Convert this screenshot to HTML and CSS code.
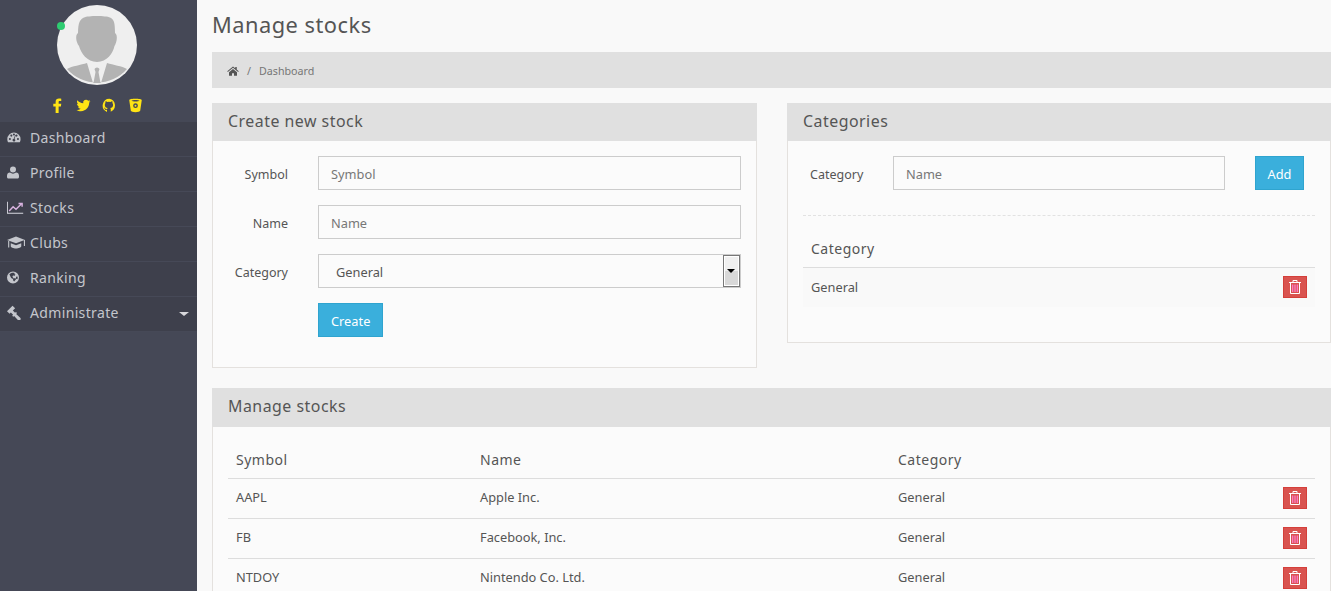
FILE: index.html

```html
<!DOCTYPE html>
<html lang="en">
<head>
<meta charset="UTF-8" />
<meta name="viewport" content="width=device-width, initial-scale=1" />
<title>Manage stocks</title>
<link rel="stylesheet" href="styles.css">
</head>
<body>

<div class="layout">
  <!-- Sidebar -->
  <aside class="sidebar">
    <div class="profile">
      <div class="avatar-wrap">
        <svg class="avatar" viewBox="0 0 80 80">
          <circle cx="40" cy="40" r="40" fill="#efefef"/>
          <path d="M10 64 C15 61 24 60 30 58 L36 78 L44 78 L50 58 C56 60 65 61 70 64 A40 40 0 0 1 10 64Z" fill="#b3b3b3"/>
          <path d="M37.500 64 a2.800 2.800 0 0 1 5 0 l-1 3 2 11 h-7 l2-11z" fill="#b3b3b3"/>
          <path d="M21 28 C21 18 23 14 27 12.500 C31 10.500 49 10.500 53 12.500 C57 14 58 18 58 28 C61 30 60 37 57.500 41 C56 48 50 57 40 57 C30 57 24 48 22 41 C19 37 18 30 21 28Z" fill="#b3b3b3"/>
        </svg>
        <span class="online-dot"></span>
      </div>
      <div class="social">
        <svg viewBox="0 0 12 16"><path d="M4 16V9H1.500V6H4V4C4 1.500 5.500 0.500 7.500 0.500 8.500 0.500 9.500 0.600 10 0.700V3.200H8.500C7.400 3.200 7.200 3.800 7.200 4.500V6H10L9.600 9H7.200V16Z"/></svg>
        <svg viewBox="0 0 24 24"><path d="M23 5c-.8.4-1.700.6-2.600.7.900-.6 1.600-1.400 2-2.500-.9.500-1.900.9-2.900 1.100A4.600 4.600 0 0 0 11.600 8.500C7.800 8.300 4.400 6.500 2.200 3.700c-1.200 2.100-.6 4.800 1.400 6.100-.7 0-1.400-.2-2-.6 0 2.200 1.500 4.100 3.700 4.600-.7.200-1.400.2-2.100.1.600 1.900 2.300 3.200 4.300 3.200A9.300 9.300 0 0 1 .800 19c2.100 1.300 4.500 2.100 7.100 2.100 8.600 0 13.500-7.300 13.200-13.800.9-.6 1.700-1.400 1.900-2.300z"/></svg>
        <svg viewBox="0 0 24 24"><path fill-rule="evenodd" d="M12 1a11 11 0 0 0-4 21.200v-3c-2.500.5-3.300-1-3.800-2.200-.3-.6-.8-1-1.200-1.300 1.300-.4 2.200.8 2.700 1.500.7 1 1.700 1 2.500.5.100-.7.400-1.200.8-1.600-2.600-.4-4.500-1.700-4.500-5 0-1.200.4-2.200 1.100-3-.2-.7-.3-1.900.2-3 1.200 0 2.300.7 2.800 1.200a10 10 0 0 1 5 0c.5-.5 1.600-1.200 2.800-1.200.5 1.100.4 2.300.2 3 .7.800 1.100 1.800 1.100 3 0 3.300-1.900 4.600-4.500 5 .5.500.8 1.200.8 2.200v3.600A11 11 0 0 0 12 1z"/></svg>
        <svg viewBox="0 0 24 24"><path fill-rule="evenodd" d="M2 3.500C2 .500 22 .500 22 3.500L19.500 20.500C19 23.500 5 23.500 4.500 20.500zM5.500 4.500C7 6 17 6 18.500 4.500 17 3 7 3 5.500 4.500zM12 8.500a3.800 3.800 0 1 0 0 7.600 3.800 3.800 0 0 0 0-7.600zM12 10.700a1.600 1.600 0 1 1 0 3.200 1.600 1.600 0 0 1 0-3.200z"/></svg>
      </div>
    </div>
    <ul class="nav">
      <li class="nav-item">
        <svg class="nav-icon" viewBox="0 -2.500 31 26" preserveAspectRatio="xMinYMid"><path fill-rule="evenodd" d="M12 2A11.500 11.500 0 0 0 .500 13.500c0 1.800.400 3.300 1.100 4.700.2.400.6.600 1 .6h18.800c.4 0 .8-.2 1-.6.700-1.400 1.100-2.900 1.100-4.700A11.500 11.500 0 0 0 12 2zM5 15a1.800 1.800 0 1 1 0-3.600A1.800 1.800 0 0 1 5 15zM7.500 9a1.800 1.800 0 1 1 0-3.600A1.800 1.800 0 0 1 7.500 9zM12 7a1.800 1.800 0 1 1 0-3.600A1.800 1.800 0 0 1 12 7zM14 16.500a2.500 2.500 0 0 1-4.500-1.500c0-1.200 1-2.200 2.200-2.400L14 6.500l.9.300-1.800 6.300c1.400 1 1.800 2.600.9 3.400zM19 15a1.800 1.800 0 1 1 0-3.600A1.800 1.800 0 0 1 19 15zM16.500 9a1.800 1.800 0 1 1 0-3.600 1.800 1.800 0 0 1 0 3.600z"/></svg>
        <span>Dashboard</span>
      </li>
      <li class="nav-item">
        <svg class="nav-icon" viewBox="1 -2.500 30 25" preserveAspectRatio="xMinYMid"><path d="M11 10a5 5 0 1 0 0-10 5 5 0 0 0 0 10zM6 10c-3 0-5 2-5 5.500v2c0 1.400 1 2.500 2.500 2.500h15c1.500 0 2.500-1.100 2.500-2.500v-2c0-3.500-2-5.500-5-5.500-1.500 1.200-3.300 2-5 2s-3.500-.8-5-2z"/></svg>
        <span>Profile</span>
      </li>
      <li class="nav-item">
        <svg class="nav-icon nav-icon-stocks" viewBox="0.500 -0.400 25 20.800" preserveAspectRatio="xMinYMid"><path d="M1 2v16h22" fill="none" stroke="#d8d8e0" stroke-width="1.500"/><path d="M3.500 15l5.500-6 4 3.500 7-7M16.500 4.500H21.500V9" fill="none" stroke="currentColor" stroke-width="2"/></svg>
        <span>Stocks</span>
      </li>
      <li class="nav-item">
        <svg class="nav-icon" viewBox="0 0 24 20" preserveAspectRatio="xMinYMid"><path d="M12 2 0 6.500l12 4.500 10.500-4v7.500H24V6.500zM5 11v4c0 1.500 3.500 3 7 3s7-1.500 7-3v-4l-7 2.500z"/><path d="M1.500 8v8.500H3V8z"/></svg>
        <span>Clubs</span>
      </li>
      <li class="nav-item">
        <svg class="nav-icon" viewBox="0 -2.500 30 25" preserveAspectRatio="xMinYMid"><path fill-rule="evenodd" d="M10 0a10 10 0 1 0 0 20 10 10 0 0 0 0-20zM4 4.500c1.500-1.500 3.500-2.500 6-2.500 1 0 2 .2 3 .6l-1 1.400 2 1-1 2-3-.5-1 2 2 3 3-.5 1 2-3 3.500-1.500-1-.5-3-3-1.500-1.500-3zM15 9l2-1 1 3-1 2-2-1z"/></svg>
        <span>Ranking</span>
      </li>
      <li class="nav-item">
        <svg class="nav-icon" viewBox="2 0 24.300 20.300" preserveAspectRatio="xMinYMid"><path d="M9.500 1 2 8.500l3.500 3.500 1.700-1.700 3 3-1.200 1.200 1.500 1.500 1.200-1.200 5 5.500c.9.900 2.300.9 3.200 0 .9-.9.900-2.300 0-3.200l-5.500-5 1.200-1.200-1.500-1.500-1.200 1.200-3-3L13 4.500z"/></svg>
        <span>Administrate</span>
        <span class="caret"></span>
      </li>
    </ul>
  </aside>

  <!-- Main -->
  <main class="main">
    <h1 class="page-title">Manage stocks</h1>
    <div class="breadcrumb">
      <svg class="home-icon" viewBox="0 0 24 20"><path d="M12 1 .500 10.500l1.200 1.500L12 3.500 22.300 12l1.200-1.500-4-3.300V2h-3v2.700zM4 12.500V19.500h6v-5h4v5h6v-7L12 6z"/></svg>
      <span class="crumb-sep">/</span>
      <span class="crumb">Dashboard</span>
    </div>

    <div class="top-row">
      <section class="panel panel-create">
        <h2 class="panel-heading">Create new stock</h2>
        <div class="panel-body form-body">
          <div class="form-row">
            <label class="form-label">Symbol</label>
            <input class="form-input" placeholder="Symbol" />
          </div>
          <div class="form-row">
            <label class="form-label">Name</label>
            <input class="form-input" placeholder="Name" />
          </div>
          <div class="form-row">
            <label class="form-label">Category</label>
            <div class="select-box">
              <span class="select-value">General</span>
              <span class="select-arrow"></span>
            </div>
          </div>
          <div class="form-row">
            <span class="form-label"></span>
            <button class="btn-info">Create</button>
          </div>
        </div>
      </section>

      <section class="panel panel-categories">
        <h2 class="panel-heading">Categories</h2>
        <div class="panel-body">
          <div class="category-form">
            <label class="form-label category-label">Category</label>
            <input class="form-input" placeholder="Name" />
            <button class="btn-info btn-add">Add</button>
          </div>
          <table class="data-table data-table-spaced">
            <thead><tr><th>Category</th><th></th></tr></thead>
            <tbody>
              <tr class="row-tint"><td>General</td><td class="cell-action"><button class="btn-delete"><svg viewBox="0 0 12 14"><use href="#trash"/></svg></button></td></tr>
            </tbody>
          </table>
        </div>
      </section>
    </div>

    <section class="panel panel-stocks">
      <h2 class="panel-heading">Manage stocks</h2>
      <div class="panel-body">
        <table class="data-table">
          <thead>
            <tr><th class="col-symbol">Symbol</th><th class="col-name">Name</th><th>Category</th><th></th></tr>
          </thead>
          <tbody>
            <tr><td>AAPL</td><td>Apple Inc.</td><td>General</td><td class="cell-action"><button class="btn-delete"><svg viewBox="0 0 12 14"><use href="#trash"/></svg></button></td></tr>
            <tr><td>FB</td><td>Facebook, Inc.</td><td>General</td><td class="cell-action"><button class="btn-delete"><svg viewBox="0 0 12 14"><use href="#trash"/></svg></button></td></tr>
            <tr><td>NTDOY</td><td>Nintendo Co. Ltd.</td><td>General</td><td class="cell-action"><button class="btn-delete"><svg viewBox="0 0 12 14"><use href="#trash"/></svg></button></td></tr>
          </tbody>
        </table>
      </div>
    </section>
  </main>
</div>

<svg class="svg-defs" width="0" height="0">
  <symbol id="trash" viewBox="0 0 12 14">
    <path d="M4 2V.500h4V2M0 2.500h12M1.500 3v10.500h9V3" fill="none" stroke="#fff"/>
    <path d="M3.700 4.500v7.500M6 4.500v7.500M8.300 4.500v7.500" fill="none" stroke="#ff7fd0" stroke-width="1.200"/>
  </symbol>
</svg>

</body>
</html>
```

FILE: styles.css

```css
html, body {
  height: 100%;
  margin: 0;
  overflow: hidden;
}
body {
  background: #f9f9f9;
  color: #555;
  font-family: "Noto Sans", "Open Sans", sans-serif;
  font-size: 12.8px;
}
.layout {
  display: flex;
  height: 100%;
  overflow: hidden;
}
.svg-defs {
  position: absolute;
}

/* Sidebar */
.sidebar {
  width: 197px;
  flex-shrink: 0;
  background: #454856;
}
.profile {
  height: 122px;
  padding: 5px 4px 0 0;
  box-sizing: border-box;
  display: flex;
  flex-direction: column;
  align-items: center;
}
.avatar-wrap {
  position: relative;
  width: 80px;
  height: 80px;
}
.avatar {
  display: block;
  width: 80px;
  height: 80px;
}
.online-dot {
  position: absolute;
  top: 17px;
  left: 0;
  width: 8px;
  height: 8px;
  border-radius: 50%;
  background: #2ecc71;
}
.social {
  display: flex;
  gap: 11px;
  margin-top: 13px;
}
.social svg {
  width: 15px;
  height: 15px;
  fill: #ffe414;
}
.nav {
  list-style: none;
  margin: 0;
  padding: 0;
}
.nav-item {
  position: relative;
  display: flex;
  align-items: center;
  height: 35px;
  box-sizing: border-box;
  padding: 0 0 3px 7px;
  background: #3e404c;
  border-bottom: 1px solid #464957;
  color: #c4c6cc;
  font-size: 14px;
  letter-spacing: 0.35px;
}
.nav-icon {
  width: 18px;
  height: 15px;
  margin-right: 5px;
  fill: #c4c6cc;
}
.nav-icon-stocks {
  color: #d9b3e0;
}
.caret {
  position: absolute;
  right: 8px;
  top: 15px;
  border-left: 5px solid transparent;
  border-right: 5px solid transparent;
  border-top: 4px solid #d8d8dc;
}

/* Main */
.main {
  flex: 1;
  min-width: 0;
  padding-left: 15px;
  overflow: hidden;
}
.page-title {
  margin: 0;
  height: 52px;
  line-height: 50px;
  font-size: 21.8px;
  font-weight: 400;
  letter-spacing: 0.5px;
  color: #555;
}
.breadcrumb {
  display: flex;
  align-items: center;
  height: 36px;
  box-sizing: border-box;
  padding: 1px 0 0 15px;
  background: #e0e0e0;
  font-size: 10.7px;
  color: #767676;
}
.home-icon {
  width: 12px;
  height: 10px;
  fill: #555;
}
.crumb-sep {
  margin: 0 8px;
}
.top-row {
  display: flex;
  align-items: flex-start;
  gap: 30px;
  margin-top: 15px;
}

/* Panels */
.panel {
  background: #fbfbfb;
  border: 1px solid #e4e1de;
  border-top: none;
  box-sizing: border-box;
}
.panel-create {
  width: 545px;
  height: 265px;
}
.panel-categories {
  width: 544px;
  height: 240px;
}
.panel-stocks {
  margin-top: 20px;
}
.panel-stocks .panel-heading {
  height: 39px;
}
.panel-heading {
  margin: 0 -1px;
  height: 38px;
  line-height: 36px;
  padding-left: 16px;
  background: #e0e0e0;
  font-size: 15.9px;
  font-weight: 400;
  letter-spacing: 0.5px;
  color: #555;
}
.panel-body {
  padding: 15px;
}
.form-row {
  display: flex;
  align-items: center;
  margin-bottom: 15px;
}
.form-label {
  width: 60px;
  flex-shrink: 0;
  margin-right: 30px;
  padding-top: 2px;
  text-align: right;
  font-size: 12.5px;
  color: #555;
}
.form-input {
  flex: 1;
  min-width: 0;
  height: 34px;
  box-sizing: border-box;
  padding: 1px 12px 0;
  border: 1px solid #ccc;
  background: #fbfbfb;
  font: inherit;
  color: #555;
}
.form-input::placeholder {
  color: #777;
  opacity: 1;
}
.select-box {
  flex: 1;
  display: flex;
  align-items: center;
  justify-content: space-between;
  height: 34px;
  box-sizing: border-box;
  padding-left: 17px;
  border: 1px solid #ccc;
}
.select-value {
  padding-top: 1px;
}
.select-arrow {
  position: relative;
  width: 17px;
  height: 32px;
  box-sizing: border-box;
  border: 1px solid #777;
  background: linear-gradient(#f0f0f0 50%, #d8d8d8 50%);
  box-shadow: inset 0 0 0 1px #fff;
}
.select-arrow::after {
  content: "";
  position: absolute;
  left: 3px;
  top: 13px;
  border-left: 4px solid transparent;
  border-right: 4px solid transparent;
  border-top: 4px solid #000;
}
.btn-info {
  height: 34px;
  padding: 1px 12px 0;
  border: 1px solid #2fa4cf;
  background: #3aafdc;
  color: #fff;
  font: inherit;
}
.category-form {
  display: flex;
  align-items: center;
  padding-bottom: 25px;
  border-bottom: 1px dashed #e2e2e2;
}
.category-label {
  width: 53px;
  margin-right: 30px;
  margin-left: 7px;
}
.btn-add {
  margin-left: 30px;
  margin-right: 11px;
  width: 49px;
  padding: 1px 0 0;
}

/* Tables */
.data-table {
  width: 100%;
  border-collapse: collapse;
  table-layout: fixed;
}
.data-table-spaced {
  margin-top: 15px;
}
.data-table th {
  height: 36px;
  padding: 0 8px 1px;
  box-sizing: border-box;
  text-align: left;
  font-size: 14px;
  font-weight: 400;
  letter-spacing: 0.5px;
  border-bottom: 1px solid #ddd;
}
.data-table td {
  height: 40px;
  padding: 0 8px 3px;
  box-sizing: border-box;
  border-bottom: 1px solid #ddd;
}
.data-table tbody tr:last-child td {
  border-bottom: none;
}
.data-table .row-tint td {
  padding-bottom: 1px;
  background: #f9f9f9;
}
.col-symbol {
  width: 244px;
}
.col-name {
  width: 418px;
}
.data-table .cell-action {
  padding-bottom: 0;
  text-align: right;
}
.btn-delete {
  width: 24px;
  height: 22px;
  padding: 0;
  border: 1px solid #d43f3a;
  background: #d9534f;
  vertical-align: middle;
}
.btn-delete svg {
  display: block;
  width: 12px;
  height: 14px;
  margin: 0 auto;
}
```
